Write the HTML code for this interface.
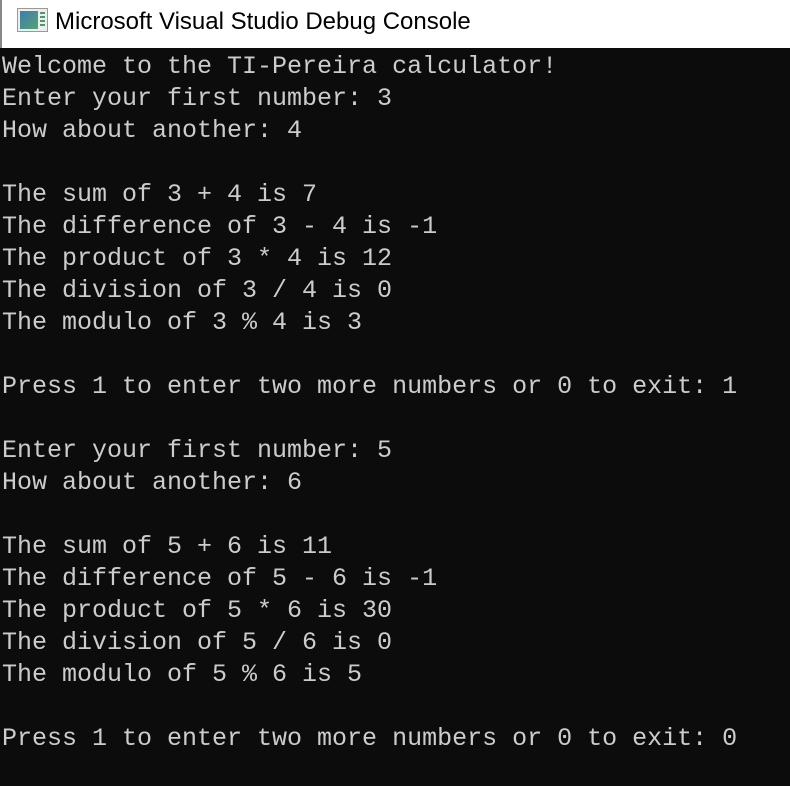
<!DOCTYPE html>
<html><head><style>
html,body{margin:0;padding:0;width:790px;height:786px;overflow:hidden;background:#0c0c0c}
.tb{position:absolute;left:0;top:0;width:790px;height:48px;background:#fff;border-left:2px solid #888;box-sizing:border-box}
.tt{position:absolute;left:53px;top:8px;font:24px "Liberation Sans",sans-serif;color:#000}
.ic{position:absolute;left:15px;top:8px;width:31px;height:24px;border:1px solid #999;background:#eee;box-sizing:border-box}
.ic .a{position:absolute;left:2px;top:2px;width:18px;height:18px;background:linear-gradient(135deg,#3a7fb0,#5aa070)}
.ic .b{position:absolute;left:22px;top:3px;width:5px;height:16px;background:repeating-linear-gradient(#4a9a6a 0 2px,#eee 2px 4px)}
pre{position:absolute;left:2px;top:51px;margin:0;font:25px/32px "Liberation Mono",monospace;color:#cccccc;letter-spacing:0}
</style></head><body>
<div class="tb"><div class="ic"><div class="a"></div><div class="b"></div></div><div class="tt">Microsoft Visual Studio Debug Console</div></div>
<pre>Welcome to the TI-Pereira calculator!
Enter your first number: 3
How about another: 4

The sum of 3 + 4 is 7
The difference of 3 - 4 is -1
The product of 3 * 4 is 12
The division of 3 / 4 is 0
The modulo of 3 % 4 is 3

Press 1 to enter two more numbers or 0 to exit: 1

Enter your first number: 5
How about another: 6

The sum of 5 + 6 is 11
The difference of 5 - 6 is -1
The product of 5 * 6 is 30
The division of 5 / 6 is 0
The modulo of 5 % 6 is 5

Press 1 to enter two more numbers or 0 to exit: 0</pre>
</body></html>
